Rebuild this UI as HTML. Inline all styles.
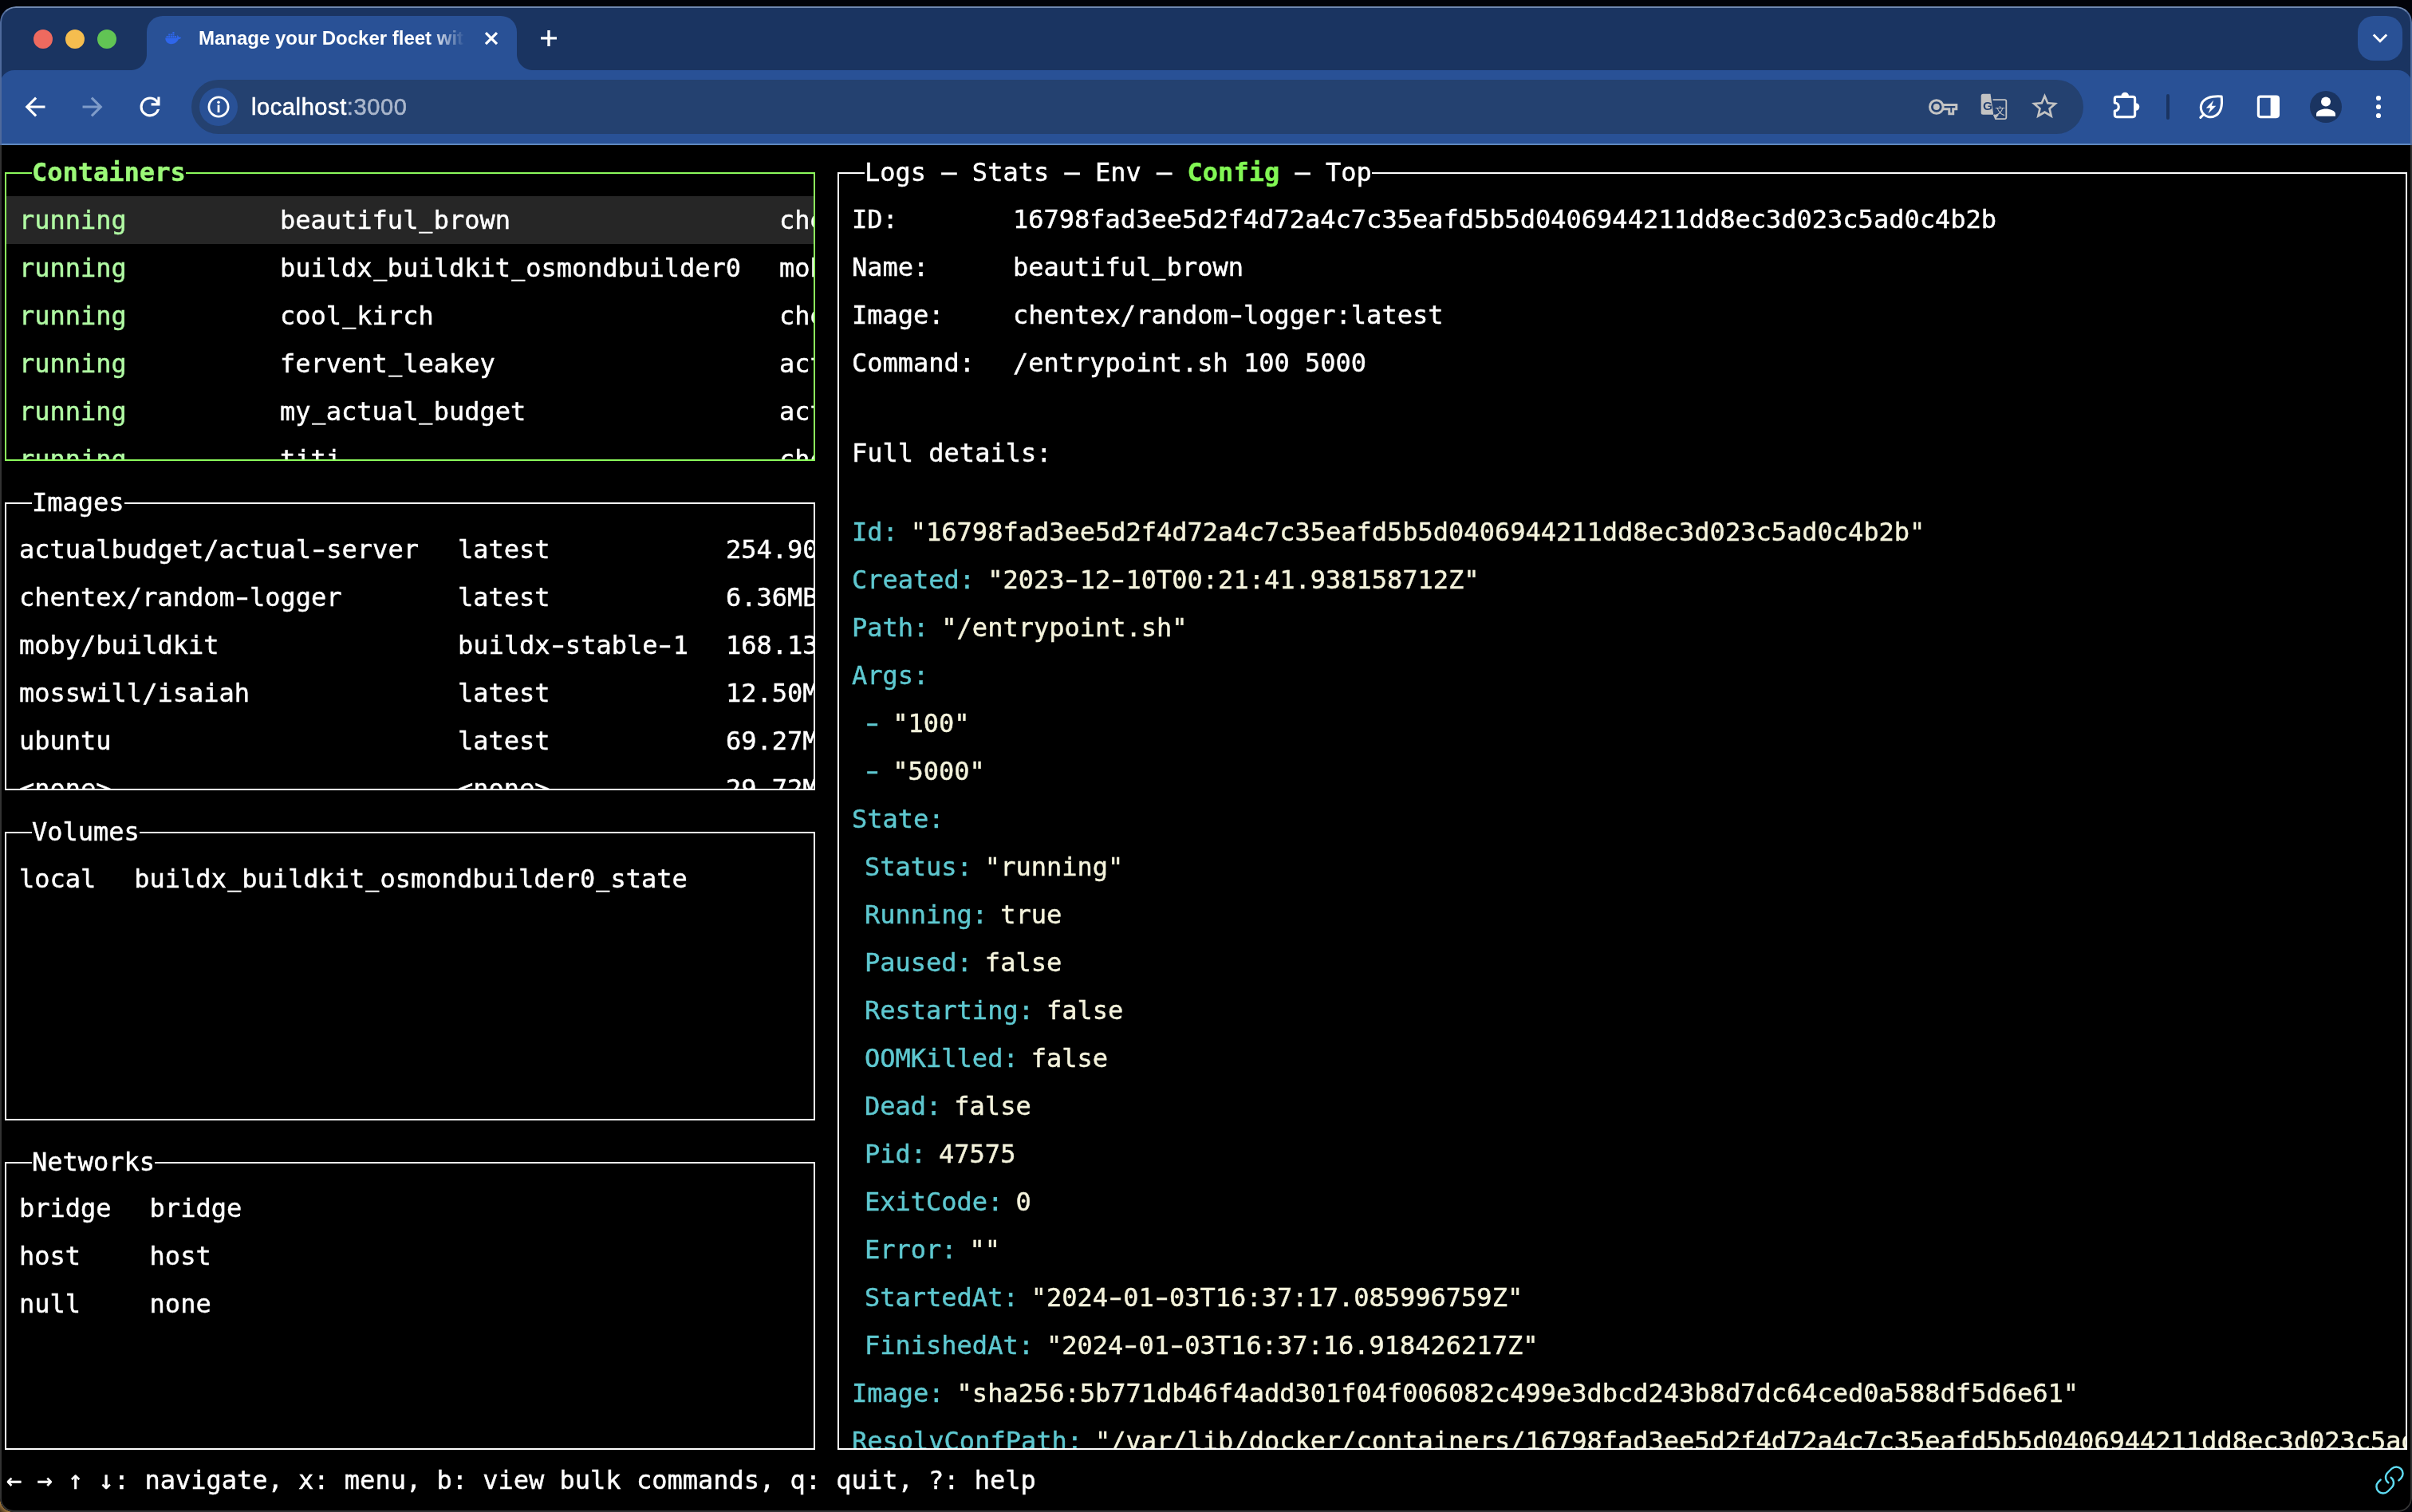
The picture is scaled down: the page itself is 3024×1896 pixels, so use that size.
<!DOCTYPE html>
<html lang="en">
<head>
<meta charset="utf-8">
<title>Manage your Docker fleet with ease</title>
<style>
html,body{margin:0;padding:0;background:#020309;}
body{width:3024px;height:1896px;position:relative;overflow:hidden;font-family:"DejaVu Sans Mono","Liberation Mono",monospace;font-size:32px;line-height:60px;color:#fff;-webkit-text-stroke:0.45px;}
*{box-sizing:border-box;}
#win{position:absolute;left:0;top:8px;width:3024px;height:1888px;border-radius:20px 20px 17px 17px;overflow:hidden;background:#000;}
#wall{position:absolute;left:0;top:1872px;width:24px;height:24px;background:linear-gradient(45deg,#3a2a18 0,#c08e48 30%,#8a6a3a 50%,#020309 75%);}
#pg{position:absolute;left:0;top:-8px;width:3024px;height:1896px;will-change:transform;}
#pg>*{position:absolute;}
#frame{left:0;top:8px;width:3024px;height:174px;background:#1a3461;}
#edgeT{left:0;top:8px;width:3024px;height:174px;border-radius:20px 20px 0 0;border:2px solid #4f6a9c;border-top-color:#7088b0;border-bottom:0;z-index:50;}
#edgeB{left:0;top:182px;width:3024px;height:1714px;border-radius:0 0 17px 17px;border:2px solid #333;border-top:0;z-index:50;}
#toolbar{left:0;top:88px;width:3024px;height:94px;background:#295196;border-radius:18px 18px 0 0;border-bottom:2px solid #5f88c0;}
#tab{left:184px;top:20px;width:464px;height:68px;background:#295196;border-radius:20px 20px 0 0;}
#tab:before,#tab:after{content:"";position:absolute;bottom:0;width:20px;height:20px;}
#tab:before{left:-20px;background:radial-gradient(circle at 0 0,rgba(41,81,150,0) 19.5px,#295196 20.5px);}
#tab:after{right:-20px;background:radial-gradient(circle at 100% 0,rgba(41,81,150,0) 19.5px,#295196 20.5px);}
.dot{width:24px;height:24px;border-radius:50%;top:37px;}
.ui{font-family:"Liberation Sans",sans-serif;white-space:pre;-webkit-text-stroke:0;}
#title{left:249px;top:31px;width:341px;height:34px;line-height:34px;font-size:24px;font-weight:bold;overflow:hidden;color:#fff;-webkit-mask-image:linear-gradient(to right,#000 0,#000 292px,rgba(0,0,0,0) 334px);mask-image:linear-gradient(to right,#000 0,#000 292px,rgba(0,0,0,0) 334px);}
#pill{left:240px;top:100px;width:2372px;height:68px;border-radius:34px;background:#244170;}
#info{z-index:4;left:250px;top:110px;width:48px;height:48px;border-radius:50%;background:#295196;}
#url{left:315px;top:114px;height:40px;line-height:40px;font-size:29px;letter-spacing:0.6px;color:#fff;-webkit-text-stroke:0.6px;}
#url span{color:#aab6cb;}
#tsearch{left:2956px;top:20px;width:56px;height:56px;border-radius:20px;background:#295196;}
#sep{left:2716px;top:118px;width:4px;height:32px;border-radius:2px;background:#1a3461;}
#prof{z-index:4;left:2896px;top:114px;width:40px;height:40px;border-radius:50%;background:#1a3461;}
svg{display:block;overflow:visible;}
#content{left:2px;top:182px;width:3020px;height:1712px;background:#000;}
</style>
</head>
<body>
<div id="wall"></div>
<div id="win"><div id="pg">
<div id="frame"></div>
<div id="tab"></div>
<div id="toolbar"></div>
<div class="dot" style="left:42px;background:#ee6a5f"></div>
<div class="dot" style="left:82px;background:#f5bd4f"></div>
<div class="dot" style="left:122px;background:#61c454"></div>
<!--FAVICON-->
<div id="title" class="ui">Manage your Docker fleet with ease</div>
<!--TABICONS-->
<div id="tsearch"></div>
<!--NAV-->
<div id="pill"></div>
<div id="info"></div>
<div id="url" class="ui">localhost<span>:3000</span></div>
<svg id="icons" style="left:0;top:0;width:3024px;height:182px;z-index:5" viewBox="0 0 3024 182">
<!-- favicon: docker whale -->
<g fill="#2f66ea" transform="translate(207,40)">
<path d="M0.3,7.6 H14.6 C15.2,6.4 15.4,5.2 15,3.9 C16.2,4.5 17,5.5 17.3,6.7 C18.3,6.4 19.4,6.6 20.2,7.3 C19.6,8.6 18.3,9.2 16.9,9.1 C15.4,12.9 12,15.2 7.6,15.2 C3.2,15.2 0.3,12.4 0.3,7.6 Z"/>
<rect x="1.6" y="5" width="2.1" height="2"/><rect x="4.2" y="5" width="2.1" height="2"/><rect x="6.800" y="5" width="2.1" height="2"/><rect x="9.4" y="5" width="2.1" height="2"/><rect x="12" y="5" width="2.1" height="2"/>
<rect x="4.2" y="2.5" width="2.1" height="2"/><rect x="6.800" y="2.5" width="2.1" height="2"/><rect x="9.4" y="2.5" width="2.1" height="2"/>
<rect x="9.4" y="0" width="2.1" height="2"/>
</g>
<!-- tab close / new tab / tab search chevron -->
<g stroke="#fff" stroke-width="3.200" fill="none" stroke-linecap="butt">
<path d="M609,41.200 L623,55.200 M623,41.200 L609,55.200"/>
<path d="M678,47.900 H698 M688,37.900 V57.900" stroke-width="3.400"/>
<path d="M2975.800,43.500 L2984,51.700 L2992.200,43.500" stroke-width="3"/>
</g>
<!-- nav: back, forward, reload -->
<g transform="translate(25.300,152.700) scale(0.039)"><path fill="#fff" d="m313-440 224 224-57 56-320-320 320-320 57 56-224 224h487v80H313Z"/></g>
<g transform="translate(97.300,152.700) scale(0.039)"><path fill="#7f9cc9" d="M647-440H160v-80h487L423-744l57-56 320 320-320 320-57-56 224-224Z"/></g>
<g transform="translate(169.300,152.700) scale(0.039)"><path fill="#fff" d="M480-160q-134 0-227-93t-93-227q0-134 93-227t227-93q69 0 132 28.500T720-690v-110h80v280H520v-80h168q-32-56-87.500-88T480-720q-100 0-170 70t-70 170q0 100 70 170t170 70q77 0 139-44t87-116h84q-28 106-114 173t-196 67Z"/></g>
<!-- site info -->
<g transform="translate(274,134)"><circle r="12.100" fill="none" stroke="#fff" stroke-width="2.800"/><circle cy="-5.800" r="1.800" fill="#fff"/><rect x="-1.400" y="-2.500" width="2.800" height="9.500" fill="#fff"/></g>
<!-- key -->
<g stroke="#c3c3c3" stroke-width="3" fill="none" stroke-linejoin="miter">
<circle cx="2427.800" cy="134" r="8.300"/>
<path d="M2436,131.500 H2452.800 V136.700 H2448.700 V142.700 H2443.800 V136.700 H2436"/>
</g>
<circle cx="2427.800" cy="134" r="4" fill="#c3c3c3"/>
<!-- translate -->
<g>
<path d="M2486.200,117.700 H2495.500 L2499.300,143.800 H2486.200 A2.500,2.500 0 0 1 2483.700,141.300 V120.200 A2.500,2.500 0 0 1 2486.200,117.700 Z" fill="#c3c3c3"/>
<path d="M2498.500,125.200 H2513.500 A1.800,1.800 0 0 1 2515.300,127 V147.300 A1.800,1.800 0 0 1 2513.500,149.100 H2502 L2499.800,143.800" fill="none" stroke="#c3c3c3" stroke-width="1.800"/>
<path d="M2500,143.800 L2502.200,149.100 L2506,143.800 Z" fill="#c3c3c3"/>
<text x="2486" y="137.500" font-family="Liberation Sans, sans-serif" font-weight="bold" font-size="15.500" fill="#244170">G</text>
<text x="2501.300" y="144" font-family="Noto Sans CJK SC, sans-serif" font-size="12.500" fill="#c3c3c3">文</text>
</g>
<!-- star -->
<g transform="translate(2543.700,113.700) scale(1.650)"><path fill="#c3c3c3" d="M22 9.240l-7.190-.62L12 2 9.190 8.630 2 9.240l5.460 4.730L5.820 21 12 17.270 18.180 21l-1.630-7.030L22 9.240zM12 15.400l-3.760 2.270 1-4.280-3.320-2.880 4.380-.38L12 6.100l1.710 4.040 4.380.38-3.320 2.880 1 4.280L12 15.400z"/></g>
<!-- extensions puzzle -->
<g>
<path d="M2651.300,129 V123.800 A2.500,2.500 0 0 1 2653.800,121.300 H2674.100 A2.500,2.500 0 0 1 2676.600,123.800 V144.100 A2.500,2.500 0 0 1 2674.100,146.600 H2653.800 A2.500,2.500 0 0 1 2651.300,144.100 V139 A5,5 0 0 0 2651.300,129 Z" fill="none" stroke="#fff" stroke-width="3.200" stroke-linejoin="round"/>
<path d="M2659.400,120.500 A4.800,4.800 0 0 1 2669,120.500 Z" fill="#fff"/>
<path d="M2677.500,129.200 A4.800,4.800 0 0 1 2677.500,138.800 Z" fill="#fff"/>
</g>
<!-- performance leaf -->
<g>
<path d="M2785.200,121 C2786.400,131.500 2785.200,139.800 2779,144.300 C2772.400,148.800 2763.800,146.800 2760.600,140.200 C2757.200,132.800 2760.800,125.600 2768.600,122.600 C2774,120.600 2780,120.700 2785.200,121 Z" fill="none" stroke="#fff" stroke-width="3" stroke-linejoin="round"/>
<path d="M2763,143.200 L2758.800,147.400" stroke="#fff" stroke-width="3" stroke-linecap="round"/>
<path d="M2775.200,125.800 L2765.800,135.600 H2771.200 L2768.400,142.600 L2778.300,132.800 H2772.800 Z" fill="#fff"/>
</g>
<!-- side panel -->
<g>
<rect x="2831.400" y="121.100" width="25" height="25.500" rx="2.500" fill="none" stroke="#fff" stroke-width="3.200"/>
<rect x="2846.600" y="121" width="10" height="26" fill="#fff"/>
</g>
<!-- profile -->
<g fill="#fff"><circle cx="2916" cy="127.600" r="6"/><path d="M2904,145.800 V143 C2904,138.600 2911,136.400 2916,136.400 C2921,136.400 2928,138.600 2928,143 V145.800 Z"/></g>
<!-- menu dots -->
<g fill="#fff"><circle cx="2982" cy="123" r="3.100"/><circle cx="2982" cy="134" r="3.100"/><circle cx="2982" cy="145" r="3.100"/></g>
</svg>

<div id="sep"></div>
<div id="prof"></div>
<div id="content"></div>
<!--PSTART--><style>
.box{border:2px solid #fff;overflow:hidden;background:#000;}
.box>div{position:absolute;left:0;height:60px;width:100%;white-space:pre;}
.box>div>span{position:absolute;top:0;}
.lg{height:38px;line-height:38px;background:#000;white-space:pre;z-index:3;}
.g{color:#b0f9a3;}
.box>div span.h,.box>div span.u{position:static;display:inline-block;}
.box>div span.h{transform:scaleX(1.5);}
.box>div span.u{transform:translateY(-2px) scaleX(.88);}
.k{color:#5ec8d0;}
.v{color:#f4f3dc;}
#ft{left:8px;top:1826px;height:60px;white-space:pre;}
</style>
<div class="box" id="b1" style="left:6px;top:216px;width:1016px;height:362px;border-color:#8cfa5c;"><div style="top:28px;background:#262626;"><span class="g" style="left:16px">running</span><span style="left:343px">beautiful<span class="u">_</span>brown</span><span style="left:969px">chentex/random<span class="h">-</span>logger:latest</span></div><div style="top:88px;"><span class="g" style="left:16px">running</span><span style="left:343px">buildx<span class="u">_</span>buildkit<span class="u">_</span>osmondbuilder0</span><span style="left:969px">moby/buildkit:buildx<span class="h">-</span>stable<span class="h">-</span>1</span></div><div style="top:148px;"><span class="g" style="left:16px">running</span><span style="left:343px">cool<span class="u">_</span>kirch</span><span style="left:969px">chentex/random<span class="h">-</span>logger:latest</span></div><div style="top:208px;"><span class="g" style="left:16px">running</span><span style="left:343px">fervent<span class="u">_</span>leakey</span><span style="left:969px">actualbudget/actual<span class="h">-</span>server:latest</span></div><div style="top:268px;"><span class="g" style="left:16px">running</span><span style="left:343px">my<span class="u">_</span>actual<span class="u">_</span>budget</span><span style="left:969px">actualbudget/actual<span class="h">-</span>server:latest</span></div><div style="top:328px;"><span class="g" style="left:16px">running</span><span style="left:343px">titi</span><span style="left:969px">chentex/random<span class="h">-</span>logger:latest</span></div></div>
<div class="lg" style="left:40px;top:197px;color:#9bf878;font-weight:bold">Containers</div>
<div class="box" id="b2" style="left:6px;top:630px;width:1016px;height:361px;"><div style="top:27px;"><span style="left:16px">actualbudget/actual<span class="h">-</span>server</span><span style="left:566px">latest</span><span style="left:902px">254.90MB</span></div><div style="top:87px;"><span style="left:16px">chentex/random<span class="h">-</span>logger</span><span style="left:566px">latest</span><span style="left:902px">6.36MB</span></div><div style="top:147px;"><span style="left:16px">moby/buildkit</span><span style="left:566px">buildx<span class="h">-</span>stable<span class="h">-</span>1</span><span style="left:902px">168.13MB</span></div><div style="top:207px;"><span style="left:16px">mosswill/isaiah</span><span style="left:566px">latest</span><span style="left:902px">12.50MB</span></div><div style="top:267px;"><span style="left:16px">ubuntu</span><span style="left:566px">latest</span><span style="left:902px">69.27MB</span></div><div style="top:327px;"><span style="left:16px">&lt;none&gt;</span><span style="left:566px">&lt;none&gt;</span><span style="left:902px">29.72MB</span></div></div>
<div class="lg" style="left:40px;top:611px">Images</div>
<div class="box" id="b3" style="left:6px;top:1043px;width:1016px;height:362px;"><div style="top:27px;"><span style="left:16px">local</span><span style="left:160.3px">buildx<span class="u">_</span>buildkit<span class="u">_</span>osmondbuilder0<span class="u">_</span>state</span></div></div>
<div class="lg" style="left:40px;top:1024px">Volumes</div>
<div class="box" id="b4" style="left:6px;top:1457px;width:1016px;height:361px;"><div style="top:26px;"><span style="left:16px">bridge</span><span style="left:179.6px">bridge</span></div><div style="top:86px;"><span style="left:16px">host</span><span style="left:179.6px">host</span></div><div style="top:146px;"><span style="left:16px">null</span><span style="left:179.6px">none</span></div></div>
<div class="lg" style="left:40px;top:1438px">Networks</div>
<div class="box" id="b5" style="left:1050px;top:216px;width:1968px;height:1602px;"><div style="top:27px;"><span style="left:16px">ID:</span><span style="left:218px">16798fad3ee5d2f4d72a4c7c35eafd5b5d0406944211dd8ec3d023c5ad0c4b2b</span></div><div style="top:87px;"><span style="left:16px">Name:</span><span style="left:218px">beautiful<span class="u">_</span>brown</span></div><div style="top:147px;"><span style="left:16px">Image:</span><span style="left:218px">chentex/random<span class="h">-</span>logger:latest</span></div><div style="top:207px;"><span style="left:16px">Command:</span><span style="left:218px">/entrypoint.sh 100 5000</span></div><div style="top:320px;"><span style="left:16px">Full details:</span></div><div style="top:419px"><span style="left:16px"><span class="k">Id:</span><span class="v" style="margin-left:16px">"16798fad3ee5d2f4d72a4c7c35eafd5b5d0406944211dd8ec3d023c5ad0c4b2b"</span></span></div><div style="top:479px"><span style="left:16px"><span class="k">Created:</span><span class="v" style="margin-left:16px">"2023<span class="h">-</span>12<span class="h">-</span>10T00:21:41.938158712Z"</span></span></div><div style="top:539px"><span style="left:16px"><span class="k">Path:</span><span class="v" style="margin-left:16px">"/entrypoint.sh"</span></span></div><div style="top:599px"><span style="left:16px"><span class="k">Args:</span></span></div><div style="top:659px"><span style="left:32px"><span class="k"><span class="h">-</span></span><span class="v" style="margin-left:16px">"100"</span></span></div><div style="top:719px"><span style="left:32px"><span class="k"><span class="h">-</span></span><span class="v" style="margin-left:16px">"5000"</span></span></div><div style="top:779px"><span style="left:16px"><span class="k">State:</span></span></div><div style="top:839px"><span style="left:32px"><span class="k">Status:</span><span class="v" style="margin-left:16px">"running"</span></span></div><div style="top:899px"><span style="left:32px"><span class="k">Running:</span><span class="v" style="margin-left:16px">true</span></span></div><div style="top:959px"><span style="left:32px"><span class="k">Paused:</span><span class="v" style="margin-left:16px">false</span></span></div><div style="top:1019px"><span style="left:32px"><span class="k">Restarting:</span><span class="v" style="margin-left:16px">false</span></span></div><div style="top:1079px"><span style="left:32px"><span class="k">OOMKilled:</span><span class="v" style="margin-left:16px">false</span></span></div><div style="top:1139px"><span style="left:32px"><span class="k">Dead:</span><span class="v" style="margin-left:16px">false</span></span></div><div style="top:1199px"><span style="left:32px"><span class="k">Pid:</span><span class="v" style="margin-left:16px">47575</span></span></div><div style="top:1259px"><span style="left:32px"><span class="k">ExitCode:</span><span class="v" style="margin-left:16px">0</span></span></div><div style="top:1319px"><span style="left:32px"><span class="k">Error:</span><span class="v" style="margin-left:16px">""</span></span></div><div style="top:1379px"><span style="left:32px"><span class="k">StartedAt:</span><span class="v" style="margin-left:16px">"2024<span class="h">-</span>01<span class="h">-</span>03T16:37:17.085996759Z"</span></span></div><div style="top:1439px"><span style="left:32px"><span class="k">FinishedAt:</span><span class="v" style="margin-left:16px">"2024<span class="h">-</span>01<span class="h">-</span>03T16:37:16.918426217Z"</span></span></div><div style="top:1499px"><span style="left:16px"><span class="k">Image:</span><span class="v" style="margin-left:16px">"sha256:5b771db46f4add301f04f006082c499e3dbcd243b8d7dc64ced0a588df5d6e61"</span></span></div><div style="top:1559px"><span style="left:16px"><span class="k">ResolvConfPath:</span><span class="v" style="margin-left:16px">"/var/lib/docker/containers/16798fad3ee5d2f4d72a4c7c35eafd5b5d0406944211dd8ec3d023c5ad0c4b2b/resolv.conf"</span></span></div></div>
<div class="lg" style="left:1084px;top:197px">Logs — Stats — Env — <b style="color:#82f754">Config</b> — Top</div>
<div id="ft">← → ↑ ↓: navigate, x: menu, b: view bulk commands, q: quit, ?: help</div>
<svg style="left:2976px;top:1836px;width:40px;height:40px" viewBox="0 0 24 24"><g transform="matrix(0 -1 -1 0 24 24)" fill="none" stroke="#5fdcf3" stroke-width="1.450" stroke-linecap="round" stroke-linejoin="round"><path d="M10 13a5 5 0 0 0 7.54.54l3-3a5 5 0 0 0-7.07-7.07l-1.72 1.710"/><path d="M14 11a5 5 0 0 0-7.54-.54l-3 3a5 5 0 0 0 7.07 7.07l1.710-1.710"/></g></svg><!--PEND-->
<div id="edgeT"></div><div id="edgeB"></div>
</div></div>
</body>
</html>
